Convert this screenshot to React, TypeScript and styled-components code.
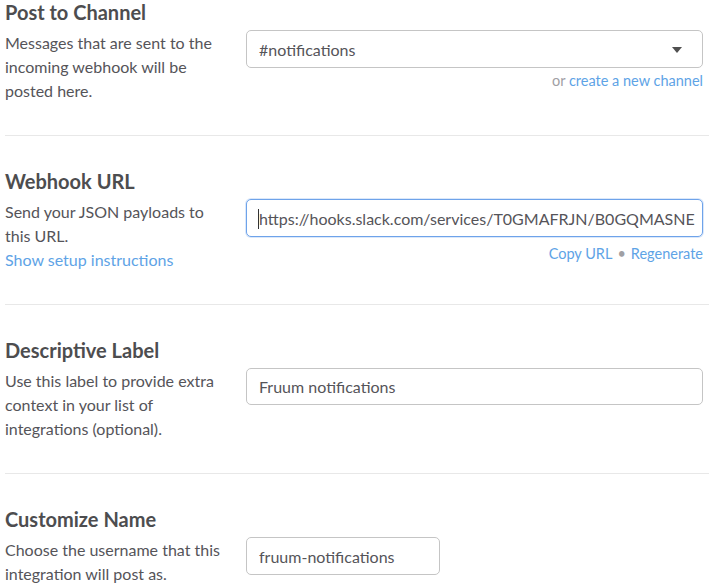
import styled, { createGlobalStyle } from 'styled-components'

/**
 * Style
 */
const GlobalStyle = createGlobalStyle`
  html, body {
    margin: 0;
    padding: 0;
    background: #fff;
  }
  body {
    font-family: Lato, "Open Sans", sans-serif;
    -webkit-font-smoothing: antialiased;
  }
`

const Page = styled.div`
  width: 709px;
  padding-left: 5px;
  box-sizing: border-box;
`

const Section = styled.section<{ $first?: boolean; $last?: boolean }>`
  padding-top: ${p => (p.$first ? '0' : '33px')};
  padding-bottom: ${p => (p.$last ? '0' : '32px')};
  border-bottom: ${p => (p.$last ? 'none' : '1px solid #e8e8e8')};
`

const Title = styled.h3`
  margin: 0 0 7px;
  font-size: 20px;
  line-height: 24px;
  font-weight: 700;
  color: #4d4d4f;
`

const Row = styled.div`
  display: grid;
  grid-template-columns: 241px 457px;
  align-items: start;
`

const Description = styled.p`
  margin: 0;
  font-size: 16px;
  line-height: 24px;
  color: #555459;
  padding-right: 18px;
`

const Link = styled.a`
  color: #5ea3e6;
  text-decoration: none;
  cursor: pointer;
`

const Field = styled.div`
  display: flex;
  flex-direction: column;
  align-items: stretch;
  margin-top: -1px;
`

const Box = styled.div<{ $focused?: boolean; $width?: number; $height?: number }>`
  position: relative;
  display: flex;
  align-items: center;
  box-sizing: border-box;
  width: ${p => (p.$width ? `${p.$width}px` : '100%')};
  height: ${p => p.$height ?? 38}px;
  padding: 0 12px;
  border: 1px solid ${p => (p.$focused ? '#6ea3ea' : '#c5c5c5')};
  border-radius: 5px;
  box-shadow: ${p => (p.$focused ? '0 0 0 1px rgba(110, 163, 234, 0.25)' : 'none')};
  background: #fff;
  font-size: 16px;
  color: #555459;
  white-space: nowrap;
  overflow: hidden;
`

const Caret = styled.span`
  position: absolute;
  left: 11px;
  top: 9px;
  width: 1px;
  height: 20px;
  background: #333;
`

const Arrow = styled.span`
  position: absolute;
  right: 20px;
  top: 16px;
  width: 0;
  height: 0;
  border-left: 5px solid transparent;
  border-right: 5px solid transparent;
  border-top: 6px solid #505050;
`

const Hint = styled.div<{ $gap?: number }>`
  align-self: flex-end;
  margin-top: ${p => p.$gap ?? 3}px;
  font-size: 14.5px;
  line-height: 20px;
  color: #a0a0a4;
`

const Dot = styled.span`
  color: #a0a0a4;
  margin: 0 5px;
`

/**
 * Component
 */
const App = (): JSX.Element => {
  return (
    <Page>
      <GlobalStyle />
      <Section $first>
        <Title>Post to Channel</Title>
        <Row>
          <Description>
            Messages that are sent to the incoming webhook will be posted here.
          </Description>
          <Field>
            <Box>
              #notifications
              <Arrow />
            </Box>
            <Hint>
              or <Link>create a new channel</Link>
            </Hint>
          </Field>
        </Row>
      </Section>

      <Section>
        <Title>Webhook URL</Title>
        <Row>
          <Description>
            Send your JSON payloads to this URL.
            <br />
            <Link>Show setup instructions</Link>
          </Description>
          <Field>
            <Box $focused>
              <Caret />
              https://hooks.slack.com/services/T0GMAFRJN/B0GQMASNE
            </Box>
            <Hint $gap={7}>
              <Link>Copy URL</Link>
              <Dot>•</Dot>
              <Link>Regenerate</Link>
            </Hint>
          </Field>
        </Row>
      </Section>

      <Section>
        <Title>Descriptive Label</Title>
        <Row>
          <Description>
            Use this label to provide extra context in your list of integrations (optional).
          </Description>
          <Field>
            <Box $height={37}>Fruum notifications</Box>
          </Field>
        </Row>
      </Section>

      <Section $last>
        <Title>Customize Name</Title>
        <Row>
          <Description>Choose the username that this integration will post as.</Description>
          <Field>
            <Box $width={194} $height={38}>fruum-notifications</Box>
          </Field>
        </Row>
      </Section>
    </Page>
  )
}

export default App
